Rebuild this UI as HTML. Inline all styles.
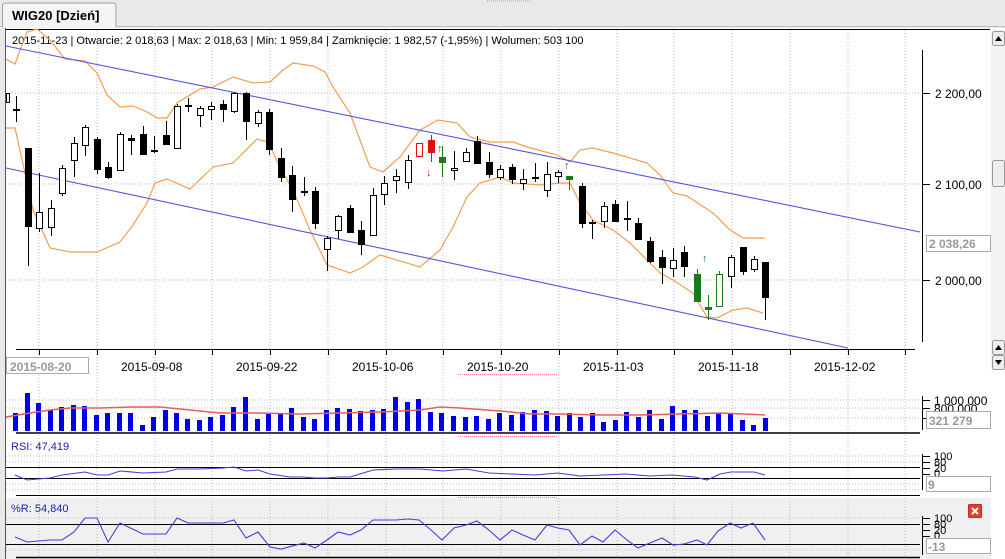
<!DOCTYPE html>
<html><head><meta charset="utf-8"><style>
html,body{margin:0;padding:0;width:1005px;height:559px;overflow:hidden;background:#fff;font-family:"Liberation Sans",Verdana,sans-serif;}
svg{display:block}
</style></head><body>
<svg width="1005" height="559" xmlns="http://www.w3.org/2000/svg" font-family="Liberation Sans, sans-serif">
<rect x="0" y="0" width="1005" height="559" fill="#fff"/>
<!-- top area -->
<rect x="0" y="0" width="1005" height="28" fill="#e9e9e9"/>
<line x1="0" y1="26.5" x2="1005" y2="26.5" stroke="#bdbdbd"/>
<path d="M2.5 27 V6 Q2.5 3 6 3 H113 Q116 3 116 6 V27" fill="#f4f4f4" stroke="#a0a0a0"/>
<rect x="3" y="25" width="112" height="3" fill="#f4f4f4"/>
<text x="12" y="20" font-size="13" font-weight="bold" fill="#000">WIG20 [Dzień]</text>
<line x1="487" y1="1" x2="530" y2="1" stroke="#f08080" stroke-dasharray="1,1"/>
<!-- left border -->
<rect x="0" y="28" width="6" height="531" fill="#e9e9e9"/>
<line x1="5.5" y1="28" x2="5.5" y2="559" stroke="#555"/>
<line x1="6" y1="29.5" x2="990" y2="29.5" stroke="#000"/>
<!-- scrollbar -->
<rect x="991" y="30" width="14" height="340" fill="#f2f2f2"/>
<rect x="992.5" y="31.5" width="12" height="14" fill="#eee" stroke="#999" rx="2"/>
<path d="M995 41 L998.5 36 L1002 41Z" fill="#000"/>
<rect x="992.5" y="160.5" width="12" height="26" fill="#eee" stroke="#999" rx="2"/>
<rect x="992.5" y="340.5" width="12" height="14" fill="#eee" stroke="#999" rx="2"/>
<path d="M995 350 L998.5 345 L1002 350Z" fill="#000"/>
<rect x="992.5" y="355.5" width="12" height="14" fill="#eee" stroke="#999" rx="2"/>
<path d="M995 360 L998.5 365 L1002 360Z" fill="#000"/>
<!-- grid -->
<g stroke="#bbb" stroke-dasharray="1,2">
<line x1="39" y1="30" x2="39" y2="557"/><line x1="97" y1="30" x2="97" y2="557"/><line x1="155" y1="30" x2="155" y2="557"/><line x1="212" y1="30" x2="212" y2="557"/><line x1="270" y1="30" x2="270" y2="557"/><line x1="328" y1="30" x2="328" y2="557"/><line x1="386" y1="30" x2="386" y2="557"/><line x1="443" y1="30" x2="443" y2="557"/><line x1="501" y1="30" x2="501" y2="557"/><line x1="559" y1="30" x2="559" y2="557"/><line x1="617" y1="30" x2="617" y2="557"/><line x1="674" y1="30" x2="674" y2="557"/><line x1="732" y1="30" x2="732" y2="557"/><line x1="790" y1="30" x2="790" y2="557"/><line x1="848" y1="30" x2="848" y2="557"/><line x1="905" y1="30" x2="905" y2="557"/>
<line x1="6" y1="93" x2="920" y2="93"/><line x1="6" y1="184" x2="920" y2="184"/><line x1="6" y1="280" x2="920" y2="280"/>
<line x1="6" y1="400" x2="920" y2="400"/><line x1="6" y1="408" x2="920" y2="408"/><line x1="6" y1="418" x2="920" y2="418"/>
<line x1="6" y1="456" x2="920" y2="456"/><line x1="6" y1="462" x2="920" y2="462"/><line x1="6" y1="484" x2="920" y2="484"/><line x1="6" y1="490" x2="920" y2="490"/>
</g>
<!-- header -->
<text x="12" y="44" font-size="11" fill="#000">2015-11-23 | Otwarcie: 2 018,63 | Max: 2 018,63 | Min: 1 959,84 | Zamknięcie: 1 982,57 (-1,95%)  | Wolumen: 503 100</text>
<!-- bands -->
<g fill="none" stroke="#f0a050" stroke-width="1.2">
<polyline points="6,59 15,64 27,32 37,29 50,40 65,59 85,61 97,73 107,95 120,107 133,106 147,112 157,118 167,118 177,103 200,89 213,87 233,77 253,83 270,82 283,70 293,63 313,66 325,72 333,87 350,113 370,167 383,172 393,163 400,157 420,130 438,120 457,123 470,137 490,142 513,142 527,147 557,155 570,162 580,150 593,148 613,153 647,163 660,175 673,193 687,196 713,213 730,230 743,238 765,238"/>
<polyline points="6,128 15,128 25,173 33,210 50,248 70,252 97,252 120,242 133,225 147,203 155,183 167,179 190,189 213,167 233,163 257,139 268,142 280,167 293,190 310,230 327,265 350,273 363,267 377,257 380,255 420,267 440,250 453,227 467,197 480,183 500,177 513,183 540,185 560,183 570,183 580,203 593,220 613,230 630,243 647,260 660,273 673,280 693,293 707,317 717,318 733,310 747,308 763,313"/>
</g>
<g stroke="#5555dd" stroke-width="1.1">
<line x1="6" y1="46" x2="920" y2="232"/>
<line x1="6" y1="168" x2="848" y2="348"/>
</g>
<!-- candles -->
<g stroke="#000" stroke-width="1">
<line x1="16.5" y1="96" x2="16.5" y2="122"/><line x1="28.5" y1="148" x2="28.5" y2="266"/><line x1="39.5" y1="173" x2="39.5" y2="232"/><line x1="51.5" y1="200" x2="51.5" y2="236"/><line x1="62.5" y1="165" x2="62.5" y2="196"/><line x1="74.5" y1="137" x2="74.5" y2="177"/><line x1="85.5" y1="125" x2="85.5" y2="156"/><line x1="97.5" y1="137" x2="97.5" y2="174"/><line x1="108.5" y1="162" x2="108.5" y2="179"/><line x1="120.5" y1="132" x2="120.5" y2="170"/><line x1="131.5" y1="135" x2="131.5" y2="155"/><line x1="143.5" y1="126" x2="143.5" y2="155"/><line x1="154.5" y1="136" x2="154.5" y2="153"/><line x1="166.5" y1="121" x2="166.5" y2="145"/><line x1="177.5" y1="104" x2="177.5" y2="148"/><line x1="188.5" y1="98" x2="188.5" y2="112"/><line x1="200.5" y1="106" x2="200.5" y2="127"/><line x1="211.5" y1="102" x2="211.5" y2="120"/><line x1="223.5" y1="100" x2="223.5" y2="122"/><line x1="234.5" y1="92" x2="234.5" y2="113"/><line x1="246.5" y1="92" x2="246.5" y2="140"/><line x1="258.5" y1="110" x2="258.5" y2="127"/><line x1="269.5" y1="109" x2="269.5" y2="155"/><line x1="281.5" y1="148" x2="281.5" y2="182"/><line x1="292.5" y1="166" x2="292.5" y2="212"/><line x1="304.5" y1="177" x2="304.5" y2="196"/><line x1="315.5" y1="187" x2="315.5" y2="229"/><line x1="327.5" y1="236" x2="327.5" y2="271"/><line x1="338.5" y1="215" x2="338.5" y2="239"/><line x1="350.5" y1="205" x2="350.5" y2="233"/><line x1="361.5" y1="221" x2="361.5" y2="255"/><line x1="373.5" y1="188" x2="373.5" y2="235"/><line x1="384.5" y1="176" x2="384.5" y2="205"/><line x1="396.5" y1="169" x2="396.5" y2="193"/><line x1="408.5" y1="155" x2="408.5" y2="189"/><line x1="454.5" y1="151" x2="454.5" y2="180"/><line x1="466.5" y1="148" x2="466.5" y2="161"/><line x1="477.5" y1="136" x2="477.5" y2="164"/><line x1="489.5" y1="152" x2="489.5" y2="178"/><line x1="500.5" y1="165" x2="500.5" y2="180"/><line x1="512.5" y1="164" x2="512.5" y2="184"/><line x1="523.5" y1="169" x2="523.5" y2="190"/><line x1="535.5" y1="163" x2="535.5" y2="182"/><line x1="547.5" y1="162" x2="547.5" y2="197"/><line x1="558.5" y1="170" x2="558.5" y2="183"/><line x1="582.5" y1="183" x2="582.5" y2="228"/><line x1="592.5" y1="220" x2="592.5" y2="239"/><line x1="604.5" y1="202" x2="604.5" y2="228"/><line x1="615.5" y1="200" x2="615.5" y2="222"/><line x1="627.5" y1="201" x2="627.5" y2="231"/><line x1="638.5" y1="218" x2="638.5" y2="240"/><line x1="650.5" y1="237" x2="650.5" y2="263"/><line x1="662.5" y1="250" x2="662.5" y2="284"/><line x1="673.5" y1="248" x2="673.5" y2="277"/><line x1="684.5" y1="246" x2="684.5" y2="277"/><line x1="731.5" y1="255" x2="731.5" y2="288"/><line x1="743.5" y1="247" x2="743.5" y2="275"/><line x1="754.5" y1="256" x2="754.5" y2="272"/><line x1="765.5" y1="262" x2="765.5" y2="320"/>
</g>
<g stroke="#000" fill="#fff">
<rect x="6.5" y="93.5" width="3" height="9"/>
<rect x="36.5" y="212.5" width="6" height="16"/><rect x="48.5" y="208.5" width="6" height="19"/><rect x="59.5" y="168.5" width="6" height="25"/><rect x="71.5" y="143.5" width="6" height="17"/><rect x="82.5" y="127.5" width="6" height="18"/><rect x="117.5" y="134.5" width="6" height="36"/><rect x="174.5" y="106.5" width="6" height="42"/><rect x="197.5" y="108.5" width="6" height="7"/><rect x="208.5" y="106.5" width="6" height="3"/><rect x="231.5" y="93.5" width="6" height="18"/><rect x="255.5" y="112.5" width="6" height="11"/><rect x="324.5" y="238.5" width="6" height="11"/><rect x="335.5" y="216.5" width="6" height="14"/><rect x="370.5" y="195.5" width="6" height="40"/><rect x="381.5" y="183.5" width="6" height="11"/><rect x="393.5" y="176.5" width="6" height="4"/><rect x="405.5" y="160.5" width="6" height="22"/><rect x="451.5" y="168.5" width="6" height="2"/><rect x="463.5" y="152.5" width="6" height="9"/><rect x="497.5" y="169.5" width="6" height="8"/><rect x="520.5" y="179.5" width="6" height="4"/><rect x="544.5" y="174.5" width="6" height="16"/><rect x="555.5" y="172.5" width="6" height="4"/><rect x="601.5" y="206.5" width="6" height="15"/><rect x="670.5" y="260.5" width="6" height="8"/><rect x="728.5" y="257.5" width="6" height="19"/><rect x="751.5" y="259.5" width="6" height="10"/>
</g>
<g fill="#000">
<rect x="13" y="109" width="7" height="2"/><rect x="25" y="148" width="7" height="79"/><rect x="94" y="139" width="7" height="31"/><rect x="105" y="167" width="7" height="11"/><rect x="128" y="138" width="7" height="3"/><rect x="140" y="134" width="7" height="21"/><rect x="151" y="150" width="7" height="2"/><rect x="163" y="135" width="7" height="10"/><rect x="185" y="105" width="7" height="2"/><rect x="220" y="104" width="7" height="6"/><rect x="243" y="93" width="7" height="29"/><rect x="266" y="112" width="7" height="38"/><rect x="278" y="158" width="7" height="20"/><rect x="289" y="175" width="7" height="25"/><rect x="301" y="191" width="7" height="2"/><rect x="312" y="191" width="7" height="33"/><rect x="347" y="208" width="7" height="25"/><rect x="358" y="230" width="7" height="15"/><rect x="474" y="141" width="7" height="23"/><rect x="486" y="162" width="7" height="13"/><rect x="509" y="167" width="7" height="13"/><rect x="532" y="177" width="7" height="2"/><rect x="579" y="186" width="7" height="38"/><rect x="589" y="222" width="7" height="2"/><rect x="612" y="204" width="7" height="18"/><rect x="624" y="218" width="7" height="2"/><rect x="635" y="223" width="7" height="17"/><rect x="647" y="241" width="7" height="21"/><rect x="659" y="257" width="7" height="11"/><rect x="681" y="252" width="7" height="15"/><rect x="740" y="247" width="7" height="25"/><rect x="762" y="262" width="7" height="36"/>
</g>
<!-- colored candles -->
<line x1="431.5" y1="135" x2="431.5" y2="162" stroke="#e01010"/>
<rect x="416.5" y="143.5" width="6" height="13" fill="#fff" stroke="#e01010"/>
<rect x="428" y="140" width="7" height="13" fill="#e01010"/>
<text x="426" y="176" font-size="11" fill="#c02020">↓</text>
<line x1="442.5" y1="146" x2="442.5" y2="177" stroke="#1a7a1a"/>
<rect x="439" y="157" width="7" height="6" fill="#1a7a1a"/>
<text x="437" y="152" font-size="11" fill="#1a7a1a">↑</text>
<line x1="569.5" y1="176" x2="569.5" y2="190" stroke="#1a7a1a"/>
<rect x="566" y="176" width="7" height="4" fill="#1a7a1a"/>
<text x="564" y="169" font-size="11" fill="#1a7a1a">↑</text>
<line x1="697.5" y1="269" x2="697.5" y2="302" stroke="#1a7a1a"/>
<rect x="694" y="274" width="7" height="28" fill="#1a7a1a"/>
<line x1="708.5" y1="295" x2="708.5" y2="320" stroke="#1a7a1a"/>
<rect x="705" y="307" width="7" height="3" fill="#1a7a1a"/>
<text x="702" y="262" font-size="11" fill="#1a7a1a">↑</text>
<line x1="719.5" y1="271" x2="719.5" y2="306" stroke="#1a7a1a"/>
<rect x="716.5" y="274.5" width="6" height="32" fill="#fff" stroke="#1a7a1a"/>
<!-- axes main -->
<line x1="922.5" y1="50" x2="922.5" y2="342" stroke="#000"/>
<g stroke="#000"><line x1="922" y1="93.5" x2="930" y2="93.5"/><line x1="922" y1="184.5" x2="930" y2="184.5"/><line x1="922" y1="280.5" x2="930" y2="280.5"/></g>
<g font-size="12" fill="#000"><text x="935" y="98">2 200,00</text><text x="935" y="189">2 100,00</text><text x="935" y="285">2 000,00</text></g>
<rect x="926.5" y="235.5" width="64" height="16" fill="#fff" stroke="#aaa"/>
<text x="929" y="248" font-size="12" font-weight="bold" fill="#999">2 038,26</text>
<line x1="16" y1="349.5" x2="915" y2="349.5" stroke="#000"/>
<g stroke="#000"><line x1="39.5" y1="349" x2="39.5" y2="355"/><line x1="97.5" y1="349" x2="97.5" y2="355"/><line x1="155.5" y1="349" x2="155.5" y2="355"/><line x1="212.5" y1="349" x2="212.5" y2="355"/><line x1="270.5" y1="349" x2="270.5" y2="355"/><line x1="328.5" y1="349" x2="328.5" y2="355"/><line x1="386.5" y1="349" x2="386.5" y2="355"/><line x1="443.5" y1="349" x2="443.5" y2="355"/><line x1="501.5" y1="349" x2="501.5" y2="355"/><line x1="559.5" y1="349" x2="559.5" y2="355"/><line x1="617.5" y1="349" x2="617.5" y2="355"/><line x1="674.5" y1="349" x2="674.5" y2="355"/><line x1="732.5" y1="349" x2="732.5" y2="355"/><line x1="790.5" y1="349" x2="790.5" y2="355"/><line x1="848.5" y1="349" x2="848.5" y2="355"/><line x1="905.5" y1="349" x2="905.5" y2="355"/></g>
<rect x="6.5" y="357.5" width="82" height="16" fill="#fff" stroke="#aaa"/>
<text x="10" y="371" font-size="12" font-weight="bold" fill="#999">2015-08-20</text>
<g font-size="12" fill="#000"><text x="121" y="371">2015-09-08</text><text x="236" y="371">2015-09-22</text><text x="352" y="371">2015-10-06</text><text x="467" y="371">2015-10-20</text><text x="583" y="371">2015-11-03</text><text x="698" y="371">2015-11-18</text><text x="814" y="371">2015-12-02</text></g>
<line x1="458" y1="374.5" x2="557" y2="374.5" stroke="#f08080" stroke-dasharray="1,1"/>
<!-- volume -->
<g fill="#0000e6">
<rect x="13" y="413" width="5" height="18"/><rect x="25" y="393" width="5" height="38"/><rect x="36" y="403" width="5" height="28"/><rect x="48" y="410" width="5" height="21"/><rect x="59" y="407" width="5" height="24"/><rect x="71" y="405" width="5" height="26"/><rect x="82" y="406" width="5" height="25"/><rect x="94" y="415" width="5" height="16"/><rect x="105" y="413" width="5" height="18"/><rect x="117" y="413" width="5" height="18"/><rect x="128" y="413" width="5" height="18"/><rect x="140" y="425" width="5" height="6"/><rect x="151" y="417" width="5" height="14"/><rect x="163" y="410" width="5" height="21"/><rect x="174" y="413" width="5" height="18"/><rect x="185" y="419" width="5" height="12"/><rect x="197" y="420" width="5" height="11"/><rect x="208" y="417" width="5" height="14"/><rect x="220" y="415" width="5" height="16"/><rect x="231" y="407" width="5" height="24"/><rect x="243" y="397" width="5" height="34"/><rect x="255" y="419" width="5" height="12"/><rect x="266" y="413" width="5" height="18"/><rect x="278" y="413" width="5" height="18"/><rect x="289" y="408" width="5" height="23"/><rect x="301" y="417" width="5" height="14"/><rect x="312" y="419" width="5" height="12"/><rect x="324" y="410" width="5" height="21"/><rect x="335" y="408" width="5" height="23"/><rect x="347" y="409" width="5" height="22"/><rect x="358" y="411" width="5" height="20"/><rect x="370" y="410" width="5" height="21"/><rect x="381" y="409" width="5" height="22"/><rect x="393" y="397" width="5" height="34"/><rect x="405" y="402" width="5" height="29"/><rect x="416" y="399" width="5" height="32"/><rect x="428" y="412" width="5" height="19"/><rect x="439" y="413" width="5" height="18"/><rect x="451" y="416" width="5" height="15"/><rect x="463" y="417" width="5" height="14"/><rect x="474" y="416" width="5" height="15"/><rect x="486" y="419" width="5" height="12"/><rect x="497" y="413" width="5" height="18"/><rect x="509" y="415" width="5" height="16"/><rect x="520" y="412" width="5" height="19"/><rect x="532" y="410" width="5" height="21"/><rect x="544" y="411" width="5" height="20"/><rect x="555" y="416" width="5" height="15"/><rect x="567" y="413" width="5" height="18"/><rect x="578" y="417" width="5" height="14"/><rect x="590" y="413" width="5" height="18"/><rect x="601" y="422" width="5" height="9"/><rect x="613" y="420" width="5" height="11"/><rect x="624" y="412" width="5" height="19"/><rect x="636" y="417" width="5" height="14"/><rect x="647" y="410" width="5" height="21"/><rect x="659" y="419" width="5" height="12"/><rect x="670" y="406" width="5" height="25"/><rect x="682" y="410" width="5" height="21"/><rect x="693" y="410" width="5" height="21"/><rect x="705" y="416" width="5" height="15"/><rect x="716" y="413" width="5" height="18"/><rect x="728" y="413" width="5" height="18"/><rect x="740" y="420" width="5" height="11"/><rect x="751" y="425" width="5" height="6"/><rect x="763" y="418" width="5" height="13"/>
</g>
<polyline fill="none" stroke="#e06060" stroke-width="1.5" points="6,417 30,413 50,410 70,408 100,408 130,407 160,407 190,410 220,413 260,413 300,414 340,413 380,412 420,410 440,407 460,408 500,411 530,414 560,414 600,415 640,415 680,414 720,413 765,415"/>
<line x1="16" y1="433" x2="920" y2="433" stroke="#000" stroke-width="1.5"/>
<line x1="922.5" y1="396" x2="922.5" y2="430" stroke="#000"/>
<g stroke="#000"><line x1="922" y1="400.5" x2="930" y2="400.5"/><line x1="922" y1="408.5" x2="930" y2="408.5"/><line x1="922" y1="418.5" x2="930" y2="418.5"/></g>
<text x="934" y="405" font-size="12" fill="#000">1 000 000</text>
<text x="934" y="413" font-size="12" fill="#000">800 000</text>
<rect x="926.5" y="411.5" width="64" height="17" fill="#fff" stroke="#aaa"/>
<text x="929" y="425" font-size="12" font-weight="bold" fill="#999">321 279</text>
<line x1="458" y1="436.5" x2="557" y2="436.5" stroke="#f08080" stroke-dasharray="1,1"/>
<!-- RSI -->
<text x="11" y="450" font-size="11" fill="#2020b0">RSI: 47,419</text>
<line x1="6" y1="467.5" x2="920" y2="467.5" stroke="#000"/>
<line x1="6" y1="478.5" x2="920" y2="478.5" stroke="#000"/>
<polyline fill="none" stroke="#4040e0" stroke-width="1.1" points="15,475 27,480 50,478 62,475 85,472 97,475 108,475 120,471 143,473 166,472 177,469 200,469 223,468 234,467 246,471 258,470 270,474 290,477 302,477 315,478 327,478 338,477 350,477 373,470 396,469 420,469 443,471 466,469 489,473 512,474 535,475 558,473 580,476 603,475 626,474 649,476 672,475 695,477 707,480 720,474 731,472 742,472 754,472 765,475"/>
<line x1="16" y1="495.5" x2="920" y2="495.5" stroke="#000"/>
<line x1="922.5" y1="454" x2="922.5" y2="490" stroke="#000"/>
<g stroke="#000"><line x1="922" y1="456.5" x2="930" y2="456.5"/><line x1="922" y1="462.5" x2="930" y2="462.5"/><line x1="922" y1="468.5" x2="930" y2="468.5"/><line x1="922" y1="474.5" x2="930" y2="474.5"/></g>
<g font-size="11" fill="#000"><text x="934" y="460">100</text><text x="934" y="466">80</text><text x="934" y="472">20</text><text x="934" y="477">0</text></g>
<rect x="926.5" y="476.5" width="64" height="15" fill="#fff" stroke="#aaa"/>
<text x="928" y="489" font-size="12" font-weight="bold" fill="#999">9</text>
<line x1="458" y1="497.5" x2="557" y2="497.5" stroke="#f08080" stroke-dasharray="1,1"/>
<!-- %R -->
<rect x="6" y="498" width="985" height="61" fill="#f0f0f0"/>
<g stroke="#bbb" stroke-dasharray="1,2"><line x1="6" y1="518" x2="920" y2="518"/><line x1="6" y1="550" x2="920" y2="550"/><line x1="39" y1="498" x2="39" y2="557"/><line x1="97" y1="498" x2="97" y2="557"/><line x1="155" y1="498" x2="155" y2="557"/><line x1="212" y1="498" x2="212" y2="557"/><line x1="270" y1="498" x2="270" y2="557"/><line x1="328" y1="498" x2="328" y2="557"/><line x1="386" y1="498" x2="386" y2="557"/><line x1="443" y1="498" x2="443" y2="557"/><line x1="501" y1="498" x2="501" y2="557"/><line x1="559" y1="498" x2="559" y2="557"/><line x1="617" y1="498" x2="617" y2="557"/><line x1="674" y1="498" x2="674" y2="557"/><line x1="732" y1="498" x2="732" y2="557"/><line x1="790" y1="498" x2="790" y2="557"/><line x1="848" y1="498" x2="848" y2="557"/><line x1="905" y1="498" x2="905" y2="557"/></g>
<text x="11" y="512" font-size="11" fill="#2020b0">%R: 54,840</text>
<line x1="6" y1="524.5" x2="920" y2="524.5" stroke="#000"/>
<line x1="6" y1="544.5" x2="920" y2="544.5" stroke="#000"/>
<polyline fill="none" stroke="#4040e0" stroke-width="1.1" points="15,537 27,542 50,540 62,540 74,532 85,518 97,518 108,542 120,523 143,534 166,534 177,518 188,523 211,523 223,523 234,520 246,538 258,532 270,547 281,549 304,543 315,548 327,540 338,532 350,535 361,530 373,520 396,520 408,519 419,520 431,530 442,540 454,528 466,525 477,521 489,530 500,540 512,530 523,535 535,540 547,525 558,528 569,530 580,545 592,536 603,542 615,530 627,540 638,548 650,543 662,538 673,545 684,544 697,540 707,545 718,531 730,523 741,528 753,523 765,540"/>
<line x1="16" y1="557.5" x2="920" y2="557.5" stroke="#000" stroke-width="1.5"/>
<line x1="922.5" y1="516" x2="922.5" y2="555" stroke="#000"/>
<g stroke="#000"><line x1="922" y1="518.5" x2="930" y2="518.5"/><line x1="922" y1="524.5" x2="930" y2="524.5"/><line x1="922" y1="530.5" x2="930" y2="530.5"/><line x1="922" y1="536.5" x2="930" y2="536.5"/></g>
<g font-size="11" fill="#000"><text x="934" y="522">100</text><text x="934" y="528">80</text><text x="934" y="534">20</text><text x="934" y="539">0</text></g>
<rect x="926.5" y="538.5" width="64" height="15" fill="#fff" stroke="#aaa"/>
<text x="928" y="551" font-size="12" font-weight="bold" fill="#999">-13</text>
<rect x="968.5" y="504.5" width="13" height="13" fill="#e04030" stroke="#c03020" rx="1"/>
<path d="M972 508 L978 514 M978 508 L972 514" stroke="#fff" stroke-width="2"/>
</svg>
</body></html>
